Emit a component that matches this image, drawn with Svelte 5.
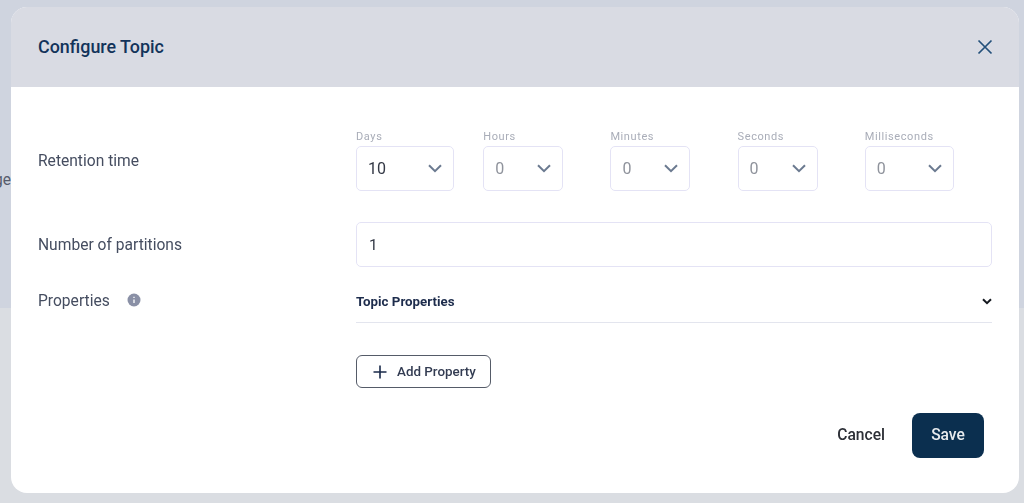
<script lang="ts">
  const units = [
    { label: 'Days', value: '10', width: 98 },
    { label: 'Hours', value: '0', width: 80 },
    { label: 'Minutes', value: '0', width: 80 },
    { label: 'Seconds', value: '0', width: 80 },
    { label: 'Milliseconds', value: '0', width: 89 }
  ];
</script>

<div class="page">
  <div class="backdrop-top"><span class="peek">ge</span></div>
  <div class="backdrop-bottom"></div>
</div>

<div class="modal">
  <header class="modal-head">
    <h1>Configure Topic</h1>
    <button class="close" aria-label="Close">
      <svg width="16" height="16" viewBox="0 0 16 16" fill="none" stroke="#24507a" stroke-width="1.7">
        <path d="M1.5 1.5l13 13M14.5 1.5l-13 13" />
      </svg>
    </button>
  </header>

  <div class="modal-body">
    <div class="row retention">
      <div class="label">Retention time</div>
      <div class="units">
        {#each units as u, i}
          <div class="unit">
            <span class="unit-label">{u.label}</span>
            <div class="select" class:active={i === 0} style="width:{u.width}px">
              <span>{u.value}</span>
              <svg width="14" height="9" viewBox="0 0 14 9" fill="none" stroke="#6b7a90" stroke-width="2">
                <path d="M1 1.2l6 6 6-6" />
              </svg>
            </div>
          </div>
        {/each}
      </div>
    </div>

    <div class="row partitions">
      <div class="label">Number of partitions</div>
      <div class="input">1</div>
    </div>

    <div class="row properties">
      <div class="label props-label">
        Properties
        <svg width="14" height="14" viewBox="0 0 14 14">
          <circle cx="7" cy="7" r="6.5" fill="#8a90a6" />
          <path d="M7 6.4v3.6M7 3.8v1.2" stroke="#fff" stroke-width="1.3" />
        </svg>
      </div>
      <div class="props-main">
        <div class="accordion">
          <span>Topic Properties</span>
          <svg width="10" height="7" viewBox="0 0 10 7" fill="none" stroke="#14181f" stroke-width="2">
            <path d="M1 1.2l4 4 4-4" />
          </svg>
        </div>
        <button class="add">
          <svg width="14" height="14" viewBox="0 0 14 14" stroke="#1a2a4a" stroke-width="1.6">
            <path d="M7 0.5v13M0.5 7h13" />
          </svg>
          Add Property
        </button>
      </div>
    </div>

    <footer class="actions">
      <button class="cancel">Cancel</button>
      <button class="save">Save</button>
    </footer>
  </div>
</div>

<style>
  :global(body) {
    margin: 0;
    font-family: Roboto, "Liberation Sans", sans-serif;
    overflow: hidden;
  }

  .page {
    height: 503px;
    display: flex;
    flex-direction: column;
    overflow: hidden;
  }

  .backdrop-top {
    height: 308px;
    background: #cfd4df;
    padding-top: 171px;
    box-sizing: border-box;
  }

  .backdrop-bottom {
    flex: 1;
    background: #dadde2;
  }

  .peek {
    display: block;
    font-size: 15.6px;
    line-height: 18px;
    color: #565c6c;
    margin-left: -6px;
  }

  .modal {
    position: fixed;
    left: 11px;
    top: 7px;
    width: 1008px;
    height: 486px;
    background: #fff;
    border-radius: 16px;
    overflow: hidden;
    display: flex;
    flex-direction: column;
  }

  .modal-head {
    height: 80px;
    flex: none;
    background: #d9dbe3;
    display: flex;
    align-items: center;
    justify-content: space-between;
    padding: 0 26px 1px 27px;
    box-sizing: border-box;
  }

  h1 {
    margin: 0;
    font-size: 17.9px;
    font-weight: 500;
    color: #12335a;
  }

  .close {
    background: none;
    border: 0;
    padding: 0;
    display: flex;
  }

  .modal-body {
    flex: 1;
    position: relative;
    padding: 0 27px;
  }

  .row {
    display: flex;
  }

  .label {
    width: 318px;
    flex: none;
    font-size: 15.6px;
    color: #454d60;
  }

  .retention {
    margin-top: 41px;
    height: 64px;
  }

  .retention .label {
    padding-top: 24px;
  }

  .units {
    display: grid;
    grid-template-columns: repeat(5, 127.2px);
  }

  .unit {
    display: flex;
    flex-direction: column;
    padding-top: 2px;
  }

  .unit-label {
    font-size: 11px;
    line-height: 13px;
    letter-spacing: 0.6px;
    color: #a9adb8;
    margin-bottom: 3px;
  }

  .select {
    height: 45px;
    box-sizing: border-box;
    border: 1px solid #e4e3f5;
    border-radius: 5px;
    display: flex;
    align-items: center;
    justify-content: space-between;
    padding: 0 11px;
    font-size: 16px;
    color: #8f939c;
  }

  .select.active {
    color: #333845;
  }

  .partitions {
    margin-top: 30px;
    align-items: center;
  }

  .input {
    width: 636px;
    height: 45px;
    box-sizing: border-box;
    border: 1px solid #e4e3f5;
    border-radius: 5px;
    display: flex;
    align-items: center;
    padding: 0 12px;
    font-size: 15.5px;
    color: #333845;
  }

  .properties {
    margin-top: 24px;
  }

  .props-label {
    display: flex;
    align-items: flex-start;
    gap: 17px;
    line-height: 18px;
    padding-top: 1px;
  }

  .props-label svg {
    margin-top: 1px;
  }

  .props-main {
    width: 636px;
  }

  .accordion {
    height: 31px;
    border-bottom: 1px solid #e3e5ee;
    display: flex;
    justify-content: space-between;
    align-items: flex-start;
    font-size: 13.3px;
    line-height: 22px;
    font-weight: 700;
    color: #1d2c4c;
  }

  .accordion svg {
    margin-top: 7px;
  }

  .add {
    margin-top: 32px;
    width: 135px;
    height: 33px;
    box-sizing: border-box;
    display: flex;
    align-items: center;
    gap: 10px;
    padding: 0 0 0 16px;
    background: #fff;
    border: 1px solid #555b68;
    border-radius: 6px;
    font: 500 13.4px Roboto, "Liberation Sans", sans-serif;
    color: #333c52;
  }

  .actions {
    position: absolute;
    right: 35px;
    bottom: 35px;
    display: flex;
    align-items: center;
    gap: 27px;
  }

  .cancel {
    background: none;
    border: 0;
    padding: 0 0 1px;
    font: 500 15.6px Roboto, "Liberation Sans", sans-serif;
    color: #2c2f36;
  }

  .save {
    width: 72px;
    height: 45px;
    background: #0b2f4f;
    border: 0;
    border-radius: 8px;
    padding: 0 0 1px;
    font: 500 15.6px Roboto, "Liberation Sans", sans-serif;
    color: #e8ebee;
  }
</style>
